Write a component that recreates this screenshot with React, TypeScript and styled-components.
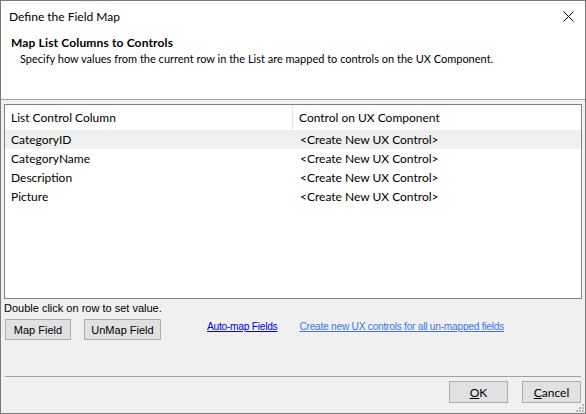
import React from "react";
import styled, { createGlobalStyle } from "styled-components";

const Global = createGlobalStyle`
  html, body { margin: 0; padding: 0; background: #ffffff; }
  body { font-family: Lato, "Noto Sans", sans-serif; font-size: 12px; color: #000; }
  * { box-sizing: border-box; }
`;

const Window = styled.div`
  width: 586px;
  height: 414px;
  border: 1px solid #7a7a7a;
  background: #f0f0f0;
  display: flex;
  flex-direction: column;
  position: relative;
  overflow: hidden;
`;

const TopPane = styled.div`
  background: #ffffff;
  height: 99px;
  border-bottom: 1px solid #a0a0a0;
  display: flex;
  flex-direction: column;
`;

const TitleBar = styled.div`
  height: 31px;
  display: flex;
  align-items: center;
  justify-content: space-between;
  padding: 0 9px 0 8px;
`;

const Title = styled.span`
  font-size: 12px;
`;

const CloseButton = styled.button`
  width: 16px;
  height: 16px;
  border: none;
  background: transparent;
  padding: 0;
  display: flex;
  align-items: center;
  justify-content: center;
`;

const Heading = styled.div`
  padding-left: 10px;
  margin-top: 3px;
  font-weight: bold;
  line-height: 16px;
  letter-spacing: 0.15px;
`;

const SubHeading = styled.div`
  padding-left: 19px;
  font-size: 11px;
  line-height: 16px;
  white-space: nowrap;
`;

const Content = styled.div`
  flex: 1;
  display: flex;
  flex-direction: column;
  padding: 4px 3px 0 3px;
`;

const ListBox = styled.div`
  height: 195px;
  background: #ffffff;
  border: 1px solid #828282;
  display: flex;
  flex-direction: column;
`;

const HeaderRow = styled.div`
  display: grid;
  grid-template-columns: 288px 1fr;
  height: 25px;
`;

const HeaderCell = styled.div<{ $divider?: boolean }>`
  display: flex;
  align-items: center;
  padding-left: 6px;
  border-right: ${(p) => (p.$divider ? "1px solid #e5e5e5" : "none")};
`;

const Row = styled.div<{ $selected?: boolean }>`
  display: grid;
  grid-template-columns: 288px 1fr;
  height: 19px;
  align-items: center;
  background: ${(p) => (p.$selected ? "#efefef" : "transparent")};
`;

const Cell = styled.div<{ $second?: boolean }>`
  padding-left: ${(p) => (p.$second ? "7px" : "6px")};
  white-space: nowrap;
`;

const Hint = styled.div`
  margin-top: 2px;
  font-family: "Liberation Sans", Arial, sans-serif;
  font-size: 11px;
  line-height: 15px;
`;

const ActionRow = styled.div`
  display: flex;
  align-items: center;
  margin-top: 3px;
  padding-left: 1px;
  font-family: "Liberation Sans", Arial, sans-serif;
  font-size: 11px;
`;

const PushButton = styled.button<{ $w: number }>`
  width: ${(p) => p.$w}px;
  height: 21px;
  background: #e1e1e1;
  border: 1px solid #adadad;
  font-family: inherit;
  font-size: 11px;
  color: #000;
  padding: 0;
  margin-right: 13px;
  white-space: nowrap;
`;

const Link = styled.a<{ $light?: boolean }>`
  align-self: flex-start;
  margin-top: 1px;
  font-size: 10.2px;
  letter-spacing: -0.25px;
  line-height: 13px;
  color: ${(p) => (p.$light ? "#3f73f2" : "#0000e6")};
  text-decoration: underline;
  margin-left: ${(p) => (p.$light ? "22px" : "33px")};
  white-space: nowrap;
  cursor: pointer;
`;

const Spacer = styled.div`
  flex: 1;
`;

const Separator = styled.div`
  height: 1px;
  background: #a0a0a0;
  margin: 0 1px;
`;

const Footer = styled.div`
  display: flex;
  justify-content: flex-end;
  gap: 14px;
  padding: 4px 1px 10px 0;
`;

const FooterButton = styled.button`
  width: 59px;
  height: 22px;
  background: #e1e1e1;
  border: 1px solid #adadad;
  font-family: inherit;
  font-size: 12px;
  color: #000;
  padding: 0;
`;

const Grip = styled.svg`
  position: absolute;
  right: 1px;
  bottom: 1px;
`;

const rows = ["CategoryID", "CategoryName", "Description", "Picture"];

export default function App() {
  return (
    <>
      <Global />
      <Window>
        <TopPane>
          <TitleBar>
            <Title>Define the Field Map</Title>
            <CloseButton aria-label="Close">
              <svg width="11" height="11" viewBox="0 0 11 11">
                <path d="M0.5 0.5 L10.5 10.5 M10.5 0.5 L0.5 10.5" stroke="#000" strokeWidth="1" />
              </svg>
            </CloseButton>
          </TitleBar>
          <Heading>Map List Columns to Controls</Heading>
          <SubHeading>
            Specify how values from the current row in the List are mapped to controls on the UX Component.
          </SubHeading>
        </TopPane>
        <Content>
          <ListBox>
            <HeaderRow>
              <HeaderCell $divider>List Control Column</HeaderCell>
              <HeaderCell>Control on UX Component</HeaderCell>
            </HeaderRow>
            {rows.map((r, i) => (
              <Row key={r} $selected={i === 0}>
                <Cell>{r}</Cell>
                <Cell $second>&lt;Create New UX Control&gt;</Cell>
              </Row>
            ))}
          </ListBox>
          <Hint>Double click on row to set value.</Hint>
          <ActionRow>
            <PushButton $w={66}>Map Field</PushButton>
            <PushButton $w={77}>UnMap Field</PushButton>
            <Link>Auto-map Fields</Link>
            <Link $light>Create new UX controls for all un-mapped fields</Link>
          </ActionRow>
          <Spacer />
          <Separator />
          <Footer>
            <FooterButton>
              <u>O</u>K
            </FooterButton>
            <FooterButton>
              <u>C</u>ancel
            </FooterButton>
          </Footer>
        </Content>
        <Grip width="8" height="8" viewBox="0 0 8 8">
          <rect x="6" y="0" width="2" height="2" fill="#b8b8b8" />
          <rect x="3" y="3" width="2" height="2" fill="#b8b8b8" />
          <rect x="6" y="3" width="2" height="2" fill="#b8b8b8" />
          <rect x="0" y="6" width="2" height="2" fill="#b8b8b8" />
          <rect x="3" y="6" width="2" height="2" fill="#b8b8b8" />
          <rect x="6" y="6" width="2" height="2" fill="#b8b8b8" />
        </Grip>
      </Window>
    </>
  );
}
